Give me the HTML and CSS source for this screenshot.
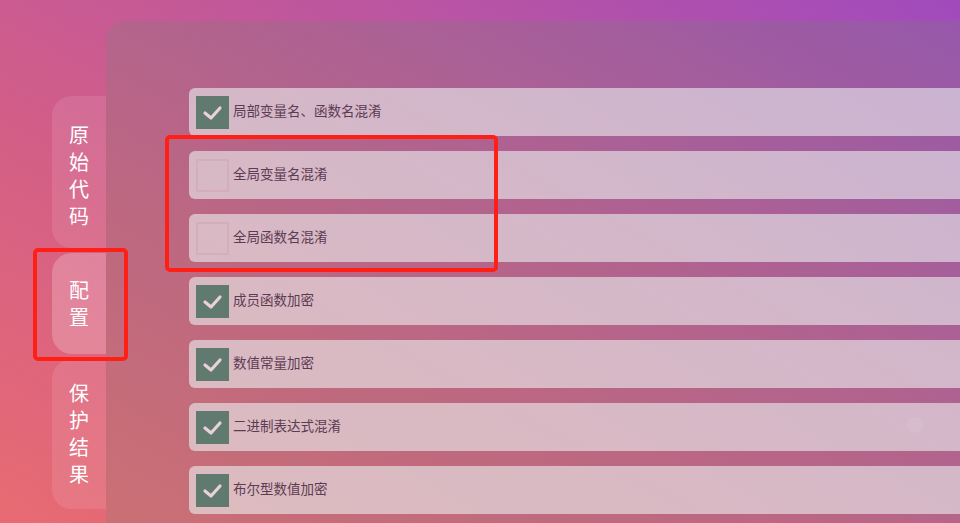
FILE: index.html
```html
<!DOCTYPE html>
<html lang="zh-CN">
<head>
<meta charset="utf-8">
<title>配置</title>
<link rel="stylesheet" href="styles.css">
</head>
<body>
<div class="app">
  <nav class="sidebar">
    <div class="tab tab-source">原<br>始<br>代<br>码</div>
    <div class="tab active">配<br>置</div>
    <div class="tab tab-result">保<br>护<br>结<br>果</div>
  </nav>
  <main class="panel">
    <ul class="options">
      <li class="option"><span class="box checked"><svg viewBox="0 0 33 33" width="33" height="33"><polyline points="9,17 15,22 24,12" /></svg></span><span class="label">局部变量名、函数名混淆</span></li>
      <li class="option"><span class="box"></span><span class="label">全局变量名混淆</span></li>
      <li class="option"><span class="box"></span><span class="label">全局函数名混淆</span></li>
      <li class="option"><span class="box checked"><svg viewBox="0 0 33 33" width="33" height="33"><polyline points="9,17 15,22 24,12" /></svg></span><span class="label">成员函数加密</span></li>
      <li class="option"><span class="box checked"><svg viewBox="0 0 33 33" width="33" height="33"><polyline points="9,17 15,22 24,12" /></svg></span><span class="label">数值常量加密</span></li>
      <li class="option"><span class="box checked"><svg viewBox="0 0 33 33" width="33" height="33"><polyline points="9,17 15,22 24,12" /></svg></span><span class="label">二进制表达式混淆</span></li>
      <li class="option"><span class="box checked"><svg viewBox="0 0 33 33" width="33" height="33"><polyline points="9,17 15,22 24,12" /></svg></span><span class="label">布尔型数值加密</span></li>
    </ul>
  </main>
</div>
<div class="dot"></div>
<div class="mark mark-options"></div>
<div class="mark mark-tab"></div>
</body>
</html>
```

FILE: styles.css
```css
html, body {
  margin: 0;
  padding: 0;
  width: 960px;
  height: 523px;
  overflow: hidden;
}
body {
  background: linear-gradient(to top right, #e86b72 0%, #d25e88 40%, #c2589a 62%, #a04abd 100%);
  font-family: "Noto Sans CJK SC", "Noto Sans", sans-serif;
  position: relative;
}
.app {
  display: flex;
  height: 523px;
}
.sidebar {
  width: 54px;
  padding: 96px 0 0 52px;
  display: flex;
  flex-direction: column;
  gap: 5px;
  flex: none;
}
.tab {
  background: rgba(255, 255, 255, 0.1);
  border-radius: 20px 0 0 20px;
  color: #fff;
  font-size: 20px;
  line-height: 27px;
  text-align: center;
}
.tab-source {
  padding: 25px 0 19px;
}
.tab.active {
  background: rgba(255, 255, 255, 0.22);
  padding: 23px 0 24px;
}
.tab-result {
  padding: 20px 0 22px;
}
.panel {
  flex: 1;
  margin-top: 21px;
  background: rgba(110, 135, 115, 0.22);
  border-radius: 20px 0 0 0;
  padding: 67px 0 0 83px;
  overflow: hidden;
}
.options {
  list-style: none;
  margin: 0 -40px 0 0;
  padding: 0;
  display: flex;
  flex-direction: column;
  gap: 15px;
}
.option {
  height: 48px;
  background: rgba(235, 240, 240, 0.6);
  border-radius: 6px;
  display: flex;
  align-items: center;
  padding-left: 7px;
  box-sizing: border-box;
}
.box {
  width: 33px;
  height: 33px;
  box-sizing: border-box;
  border: 2px solid rgba(205, 150, 170, 0.3);
  flex: none;
}
.box.checked {
  background: #617a6f;
  border: none;
}
.box svg {
  display: block;
}
.box polyline {
  fill: none;
  stroke: #ead0dc;
  stroke-width: 3.2;
  stroke-linecap: round;
  stroke-linejoin: round;
}
.label {
  margin-left: 4px;
  margin-bottom: 4px;
  font-size: 13.5px;
  line-height: 16px;
  color: #5c3b53;
}
.dot {
  position: absolute;
  left: 907px;
  top: 417px;
  width: 16px;
  height: 16px;
  border-radius: 50%;
  background: rgba(255, 255, 255, 0.07);
}
.mark {
  position: absolute;
  border: 4.5px solid #ff1f14;
  border-radius: 5px;
  box-sizing: border-box;
}
.mark-options {
  left: 165px;
  top: 135px;
  width: 333px;
  height: 137px;
}
.mark-tab {
  left: 33px;
  top: 248px;
  width: 95px;
  height: 113px;
}
```
